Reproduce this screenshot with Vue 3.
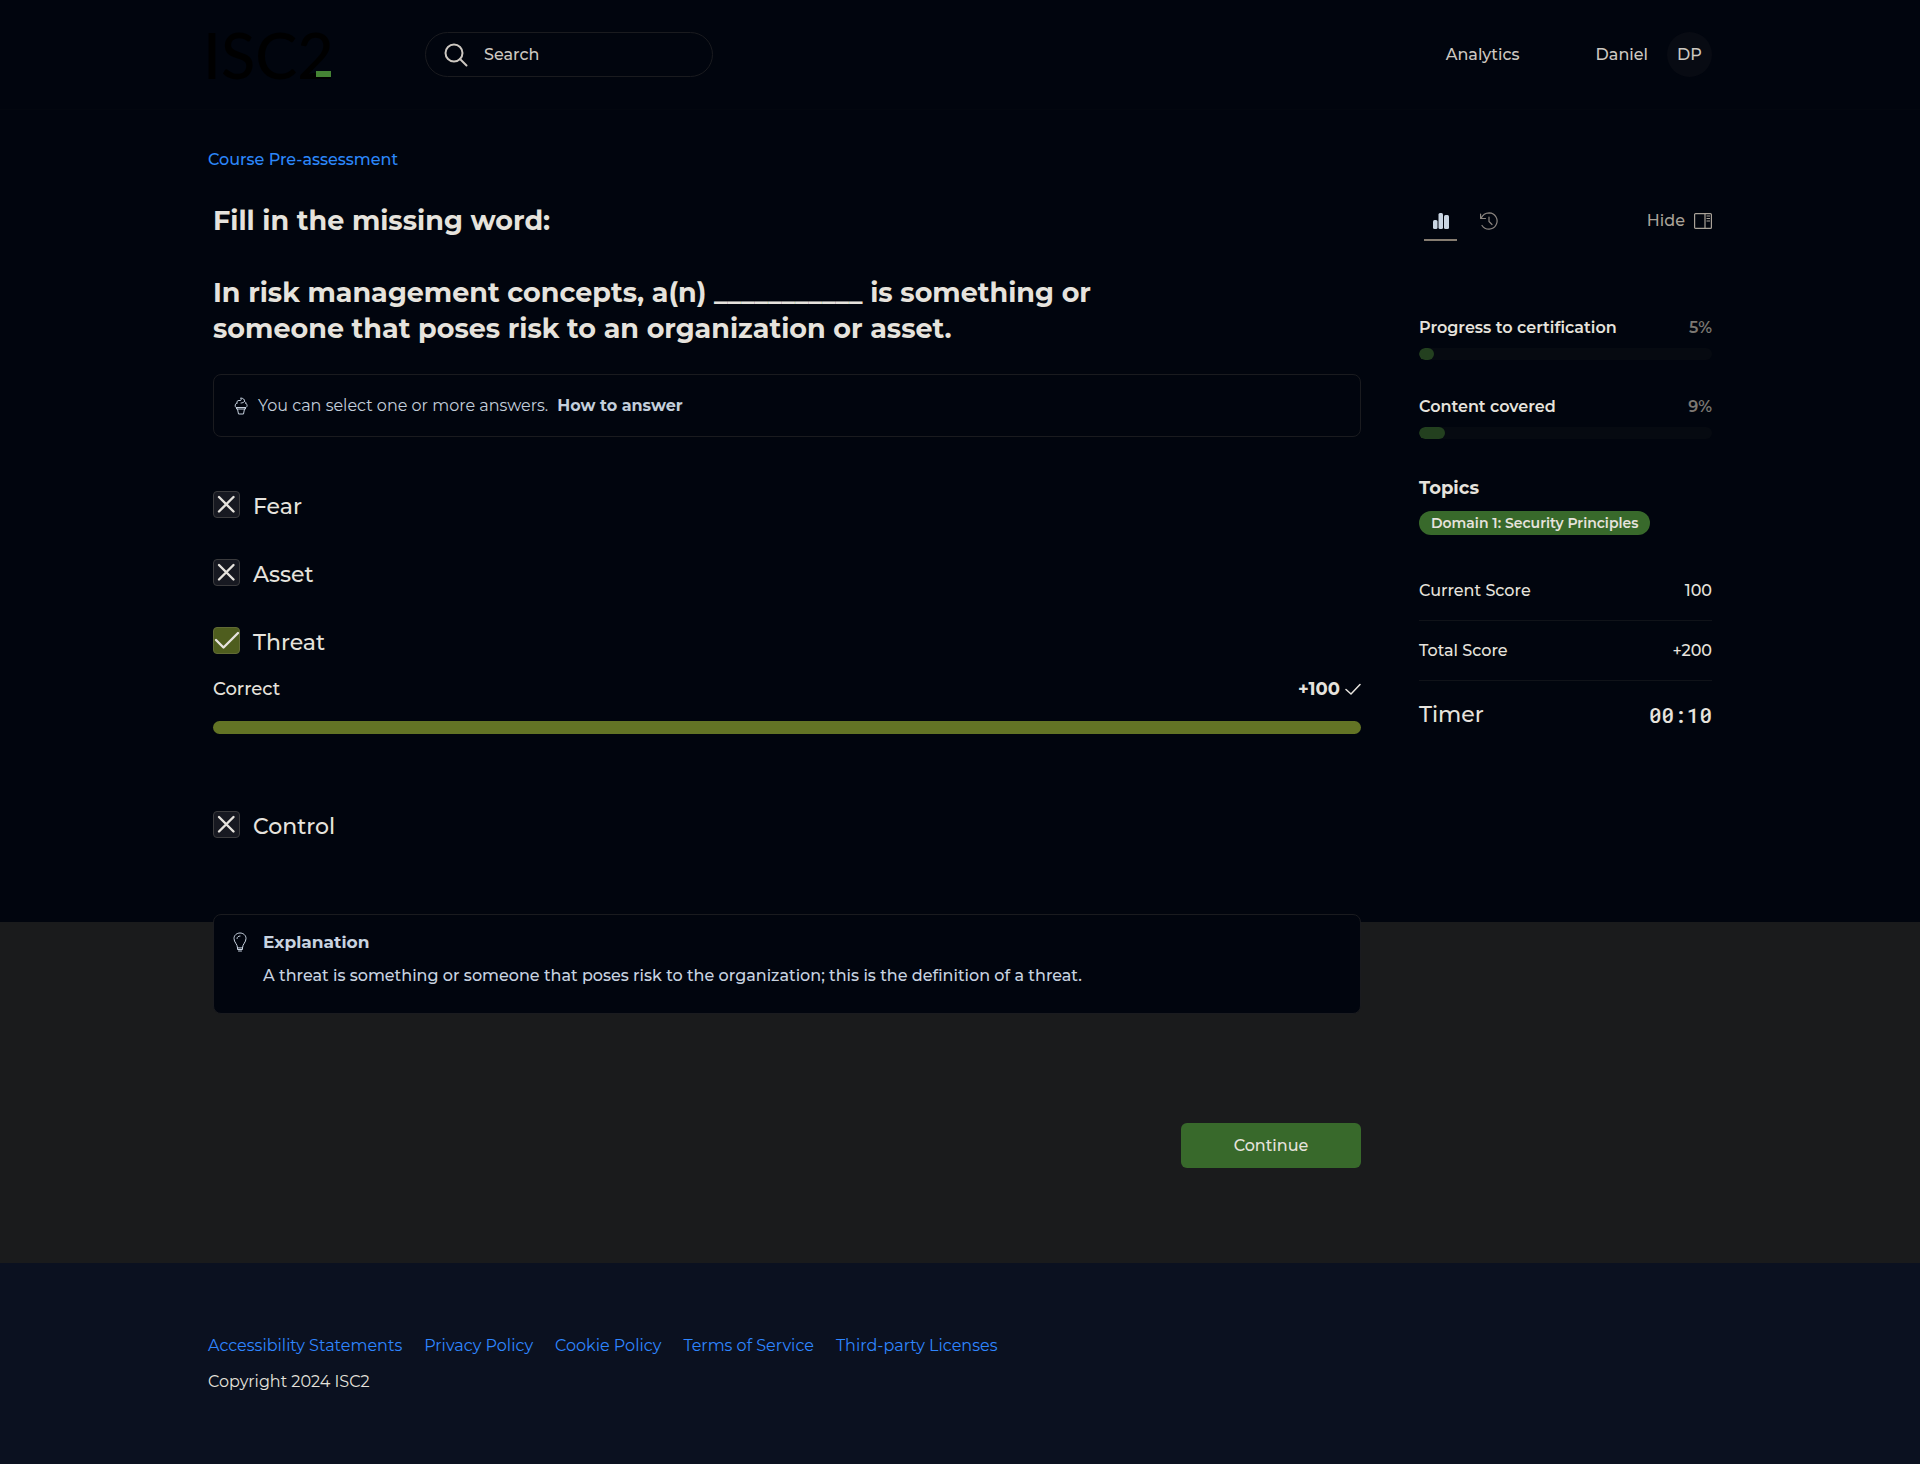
<script setup>
import { ref } from 'vue'

const query = ref('')
const options = ref([
  { id: 'fear', label: 'Fear', correct: false },
  { id: 'asset', label: 'Asset', correct: false },
  { id: 'threat', label: 'Threat', correct: true },
  { id: 'control', label: 'Control', correct: false },
])
const meters = [
  { label: 'Progress to certification', value: 5 },
  { label: 'Content covered', value: 9 },
]
const scores = [
  { label: 'Current Score', value: '100' },
  { label: 'Total Score', value: '+200' },
]
const footerLinks = [
  'Accessibility Statements',
  'Privacy Policy',
  'Cookie Policy',
  'Terms of Service',
  'Third-party Licenses',
]
</script>

<template>
  <div class="page">
    <header class="header">
      <div class="container header-row">
        <a href="#" class="logo">ISC2<span class="logo-bar"></span></a>
        <form class="search" @submit.prevent>
          <svg class="search-icon" viewBox="0 0 24 24" fill="none" stroke="currentColor" stroke-width="2" stroke-linecap="round" aria-hidden="true">
            <circle cx="10" cy="10" r="8.5" />
            <path d="M16 16l6.5 6.5" />
          </svg>
          <input v-model="query" type="text" placeholder="Search" aria-label="Search" />
        </form>
        <nav class="nav">
          <a href="#" class="nav-link">Analytics</a>
          <a href="#" class="user">
            <span>Daniel</span>
            <span class="avatar">DP</span>
          </a>
        </nav>
      </div>
    </header>

    <div class="container">
      <a href="#" class="breadcrumb">Course Pre-assessment</a>
      <div class="columns">
        <main class="main">
          <h1 class="question">
            Fill in the missing word:<br /><br />In risk management concepts, a(n) ___________ is something or
            someone that poses risk to an organization or asset.
          </h1>

          <div class="hint">
            <svg class="hint-icon" viewBox="0 0 16 18" fill="none" stroke="currentColor" stroke-linejoin="round" stroke-linecap="round" aria-hidden="true">
              <path d="M4 6C3.500 4.500 4.500 3.500 6 3.500H7C8.500 3.500 8.500 2 7.500 1C10 1 12 2.500 11.500 4.500C12.500 4.800 13 5.500 13 6.500" />
              <path d="M8 6C9.500 6 10.500 5.500 11.500 4.500" />
              <path d="M4 6C2 6 1.500 9.500 3 10.500H13C14.500 9.500 14.500 7.500 13 6.500" />
              <path d="M3.500 10.500V12H12.500V10.500M4.500 12L5.500 17H10.500L11.500 12" />
            </svg>
            <span>You can select one or more answers.</span>
            <a href="#" class="hint-link">How to answer</a>
          </div>

          <ul class="options">
            <li v-for="option in options" :key="option.id" class="option">
              <div class="option-row">
                <span class="check" :class="{ right: option.correct }">
                  <input :id="option.id" v-model="option.correct" type="checkbox" disabled />
                  <svg viewBox="0 0 27 27" fill="none" stroke="currentColor" stroke-width="2.400" stroke-linecap="round" stroke-linejoin="round" aria-hidden="true">
                    <path v-if="option.correct" d="M3 13L10.500 20.500L25 6" />
                    <path v-else d="M6 6L20.500 20.500M20.500 6L6 20.500" />
                  </svg>
                </span>
                <label :for="option.id">{{ option.label }}</label>
              </div>
              <div v-if="option.correct" class="result">
                <div class="result-row">
                  <span>Correct</span>
                  <span class="points">
                    +100
                    <svg class="points-icon" viewBox="0 0 16 16" fill="none" stroke="currentColor" stroke-width="1.500" stroke-linecap="round" stroke-linejoin="round" aria-hidden="true">
                      <path d="M1 8.500L6 13L15 3.500" />
                    </svg>
                  </span>
                </div>
                <div class="result-bar"></div>
              </div>
            </li>
          </ul>

          <section class="explanation">
            <svg class="bulb" viewBox="0 0 14 20" fill="none" stroke="currentColor" stroke-linecap="round" stroke-linejoin="round" aria-hidden="true">
              <path d="M4.500 15.500C4.500 12 1 10.500 1 6.500C1 3 4 1 7 1S13 3 13 6.500C13 10.500 9.500 12 9.500 15.500Z" />
              <path d="M4 6.500C4 5 5.500 4 7 4M4.500 15.500V17.500H9.500V15.500M5.500 19H8.500" />
            </svg>
            <div>
              <h2>Explanation</h2>
              <p>A threat is something or someone that poses risk to the organization; this is the definition of a threat.</p>
            </div>
          </section>

          <div class="actions">
            <button type="button" class="continue">Continue</button>
          </div>
        </main>

        <aside class="sidebar">
          <div class="tabs">
            <button type="button" class="tab active" aria-label="Statistics">
              <svg viewBox="0 0 18 18" fill="currentColor" aria-hidden="true">
                <rect x="1" y="8" width="4.500" height="9" rx="1.500" />
                <rect x="6.500" y="1" width="4.500" height="16" rx="1.500" />
                <rect x="12" y="3" width="5" height="14" rx="1.500" />
              </svg>
            </button>
            <button type="button" class="tab" aria-label="History">
              <svg viewBox="0 0 18 18" fill="none" stroke="currentColor" stroke-width="1.200" stroke-linecap="round" stroke-linejoin="round" aria-hidden="true">
                <path d="M.6 2V6.500H5.500M1 6.500C2.500 3 5.500 .8 9.200 .8A8.200 8.200 0 1 1 2 13.500" />
                <path d="M9 5V9.500L12 12.500" />
              </svg>
            </button>
            <button type="button" class="hide">
              Hide
              <svg viewBox="0 0 18 16" fill="none" stroke="currentColor" stroke-width="1.200" aria-hidden="true">
                <rect x=".6" y=".6" width="16.800" height="14.800" rx="1" />
                <path d="M11 1V15M12.500 3H16M12.500 5.500H16M12.500 8H16" />
              </svg>
            </button>
          </div>

          <div v-for="meter in meters" :key="meter.label" class="meter">
            <div class="meter-row">
              <span>{{ meter.label }}</span>
              <span class="meter-value">{{ meter.value }}%</span>
            </div>
            <div class="track" role="progressbar" :aria-label="meter.label" :aria-valuenow="meter.value">
              <div class="fill" :style="{ width: meter.value + '%' }"></div>
            </div>
          </div>

          <h3>Topics</h3>
          <span class="pill">Domain 1: Security Principles</span>

          <dl class="scores">
            <div v-for="score in scores" :key="score.label" class="score">
              <dt>{{ score.label }}</dt>
              <dd>{{ score.value }}</dd>
            </div>
            <div class="timer">
              <dt>Timer</dt>
              <dd>00:10</dd>
            </div>
          </dl>
        </aside>
      </div>
    </div>

    <footer class="footer">
      <div class="container">
        <nav class="footer-links">
          <a v-for="link in footerLinks" :key="link" href="#">{{ link }}</a>
        </nav>
        <p>Copyright 2024 ISC2</p>
      </div>
    </footer>
  </div>
</template>

<style>
body {
  margin: 0;
  background: #1a1b1c;
}
</style>

<style scoped>
* {
  box-sizing: border-box;
}

.page {
  font-family: Montserrat, Inter, sans-serif;
  font-size: 16px;
  font-weight: 500;
  line-height: 24px;
  color: #e6e3dd;
  background: linear-gradient(#01050e 922px, #1a1b1c 922px);
}

a {
  color: inherit;
  text-decoration: none;
}

button {
  padding: 0;
  border: 0;
  background: none;
  font: inherit;
  color: inherit;
}

h1, h2, h3, p, ul, dl, dd {
  margin: 0;
  padding: 0;
}

svg {
  display: block;
  flex: none;
}

.container {
  max-width: 1552px;
  margin: 0 auto;
  padding: 0 24px;
}

/* Header */
.header {
  border-bottom: 1px solid #03070f;
}

.header-row {
  display: flex;
  align-items: center;
  height: 109px;
}

.logo {
  position: relative;
  width: 123px;
  margin-right: 94px;
  font-family: Lato, sans-serif;
  font-size: 63px;
  font-weight: 500;
  line-height: 45px;
  text-indent: -5px;
  color: #000;
}

.logo-bar {
  position: absolute;
  right: 0;
  bottom: 0;
  width: 15px;
  height: 6px;
  background: #458434;
}

.search {
  display: flex;
  align-items: center;
  gap: 16px;
  width: 288px;
  height: 45px;
  padding: 0 18px;
  border: 1px solid #1a1b1f;
  border-radius: 23px;
}

.search-icon {
  width: 24px;
  height: 24px;
  color: #cdc8c1;
}

.search input {
  flex: 1;
  min-width: 0;
  padding: 0;
  border: 0;
  outline: 0;
  background: none;
  font: inherit;
  color: inherit;
}

.search input::placeholder {
  color: #cdc8c1;
  opacity: 1;
}

.nav {
  display: flex;
  align-items: center;
  gap: 76px;
  margin-left: auto;
  color: #cdc8c1;
}

.user {
  display: flex;
  align-items: center;
  gap: 19px;
}

.avatar {
  width: 45px;
  height: 45px;
  border-radius: 50%;
  background: #080b13;
  line-height: 45px;
  text-align: center;
}

/* Layout */
.breadcrumb {
  display: inline-block;
  margin-top: 38px;
  color: #2c87fa;
}

.columns {
  display: flex;
  align-items: flex-start;
  gap: 58px;
  padding: 31px 0 95px 5px;
}

.main {
  flex: 1;
  min-width: 0;
}

.sidebar {
  flex: none;
  width: 293px;
}

/* Question */
.question {
  max-width: 920px;
  font-size: 27px;
  font-weight: 700;
  line-height: 36px;
}

.hint {
  display: flex;
  align-items: center;
  gap: 9px;
  height: 63px;
  margin-top: 27px;
  padding: 0 19px;
  border: 1px solid #1a1b1f;
  border-radius: 8px;
  font-weight: 400;
  color: #c3cedb;
}

.hint-icon {
  width: 16px;
  height: 18px;
}

.hint-link {
  font-weight: 700;
}

.options {
  display: flex;
  flex-direction: column;
  gap: 41px;
  margin-top: 54px;
  list-style: none;
}

.option-row {
  display: flex;
  align-items: center;
  gap: 13px;
  height: 27px;
  font-size: 22px;
}

.option-row label {
  padding-top: 4px;
}

.check {
  display: grid;
  width: 27px;
  height: 27px;
}

.check > * {
  grid-area: 1 / 1;
}

.check input {
  appearance: none;
  width: 27px;
  height: 27px;
  margin: 0;
  border: 1px solid #3b3b3d;
  border-radius: 4px;
  background: #171921;
}

.check.right input {
  border-color: #616b35;
  background: #4e5d1e;
}

.result {
  padding-bottom: 36px;
}

.result-row {
  display: flex;
  justify-content: space-between;
  align-items: center;
  margin-top: 23px;
  font-size: 18px;
}

.points {
  display: flex;
  align-items: center;
  gap: 5px;
  font-weight: 700;
}

.points-icon {
  width: 16px;
  height: 16px;
}

.result-bar {
  height: 13px;
  margin-top: 20px;
  border-radius: 7px;
  background: #637425;
}

.explanation {
  display: flex;
  gap: 16px;
  min-height: 100px;
  margin-top: 76px;
  padding: 15px 19px;
  border: 1px solid #1a1b1f;
  border-radius: 8px;
  background: #01050e;
  color: #c8d3e0;
}

.bulb {
  width: 14px;
  height: 20px;
  margin-top: 2px;
}

.explanation h2 {
  font-size: 17px;
  font-weight: 700;
}

.explanation p {
  margin-top: 10px;
}

.actions {
  display: flex;
  justify-content: flex-end;
  margin-top: 109px;
}

.continue {
  width: 180px;
  height: 45px;
  border-radius: 6px;
  background: #38692b;
}

/* Sidebar */
.tabs {
  display: flex;
  align-items: flex-start;
  padding-left: 5px;
  color: #8c8680;
}

.tab {
  display: flex;
  justify-content: center;
  width: 33px;
  height: 38px;
  margin-right: 15px;
  padding-top: 9px;
}

.tab svg {
  width: 18px;
  height: 18px;
}

.tab.active {
  border-bottom: 2px solid #857c70;
  color: #c9d5e2;
}

.hide {
  display: flex;
  align-items: center;
  gap: 9px;
  margin: 6px 0 0 auto;
  color: #a9a298;
}

.hide svg {
  width: 18px;
  height: 16px;
}

.meter {
  margin-top: 35px;
}

.tabs + .meter {
  margin-top: 75px;
}

.meter-row {
  display: flex;
  justify-content: space-between;
  font-weight: 600;
}

.meter-value {
  color: #7b7772;
}

.track {
  height: 12px;
  margin-top: 8px;
  overflow: hidden;
  border-radius: 6px;
  background: #060a11;
}

.fill {
  height: 100%;
  border-radius: 6px;
  background: #23401f;
}

h3 {
  margin-top: 37px;
  font-size: 18px;
  font-weight: 700;
}

.pill {
  display: inline-block;
  margin-top: 11px;
  padding: 0 12px;
  border-radius: 12px;
  background: #38692b;
  font-size: 14px;
  font-weight: 600;
}

.scores {
  margin-top: 26px;
}

.score,
.timer {
  display: flex;
  justify-content: space-between;
  align-items: center;
  height: 60px;
}

.score {
  border-bottom: 1px solid #101319;
}

.timer {
  height: 68px;
  font-size: 22px;
}

.timer dd {
  font-family: "Roboto Mono", "Liberation Mono", monospace;
  font-size: 21px;
}

/* Footer */
.footer {
  padding: 71px 0 70px;
  background: #0b1120;
}

.footer-links {
  display: flex;
  flex-wrap: wrap;
  gap: 22px;
  font-weight: 400;
  color: #2f86ff;
}

.footer p {
  margin-top: 12px;
  font-weight: 400;
}
</style>
